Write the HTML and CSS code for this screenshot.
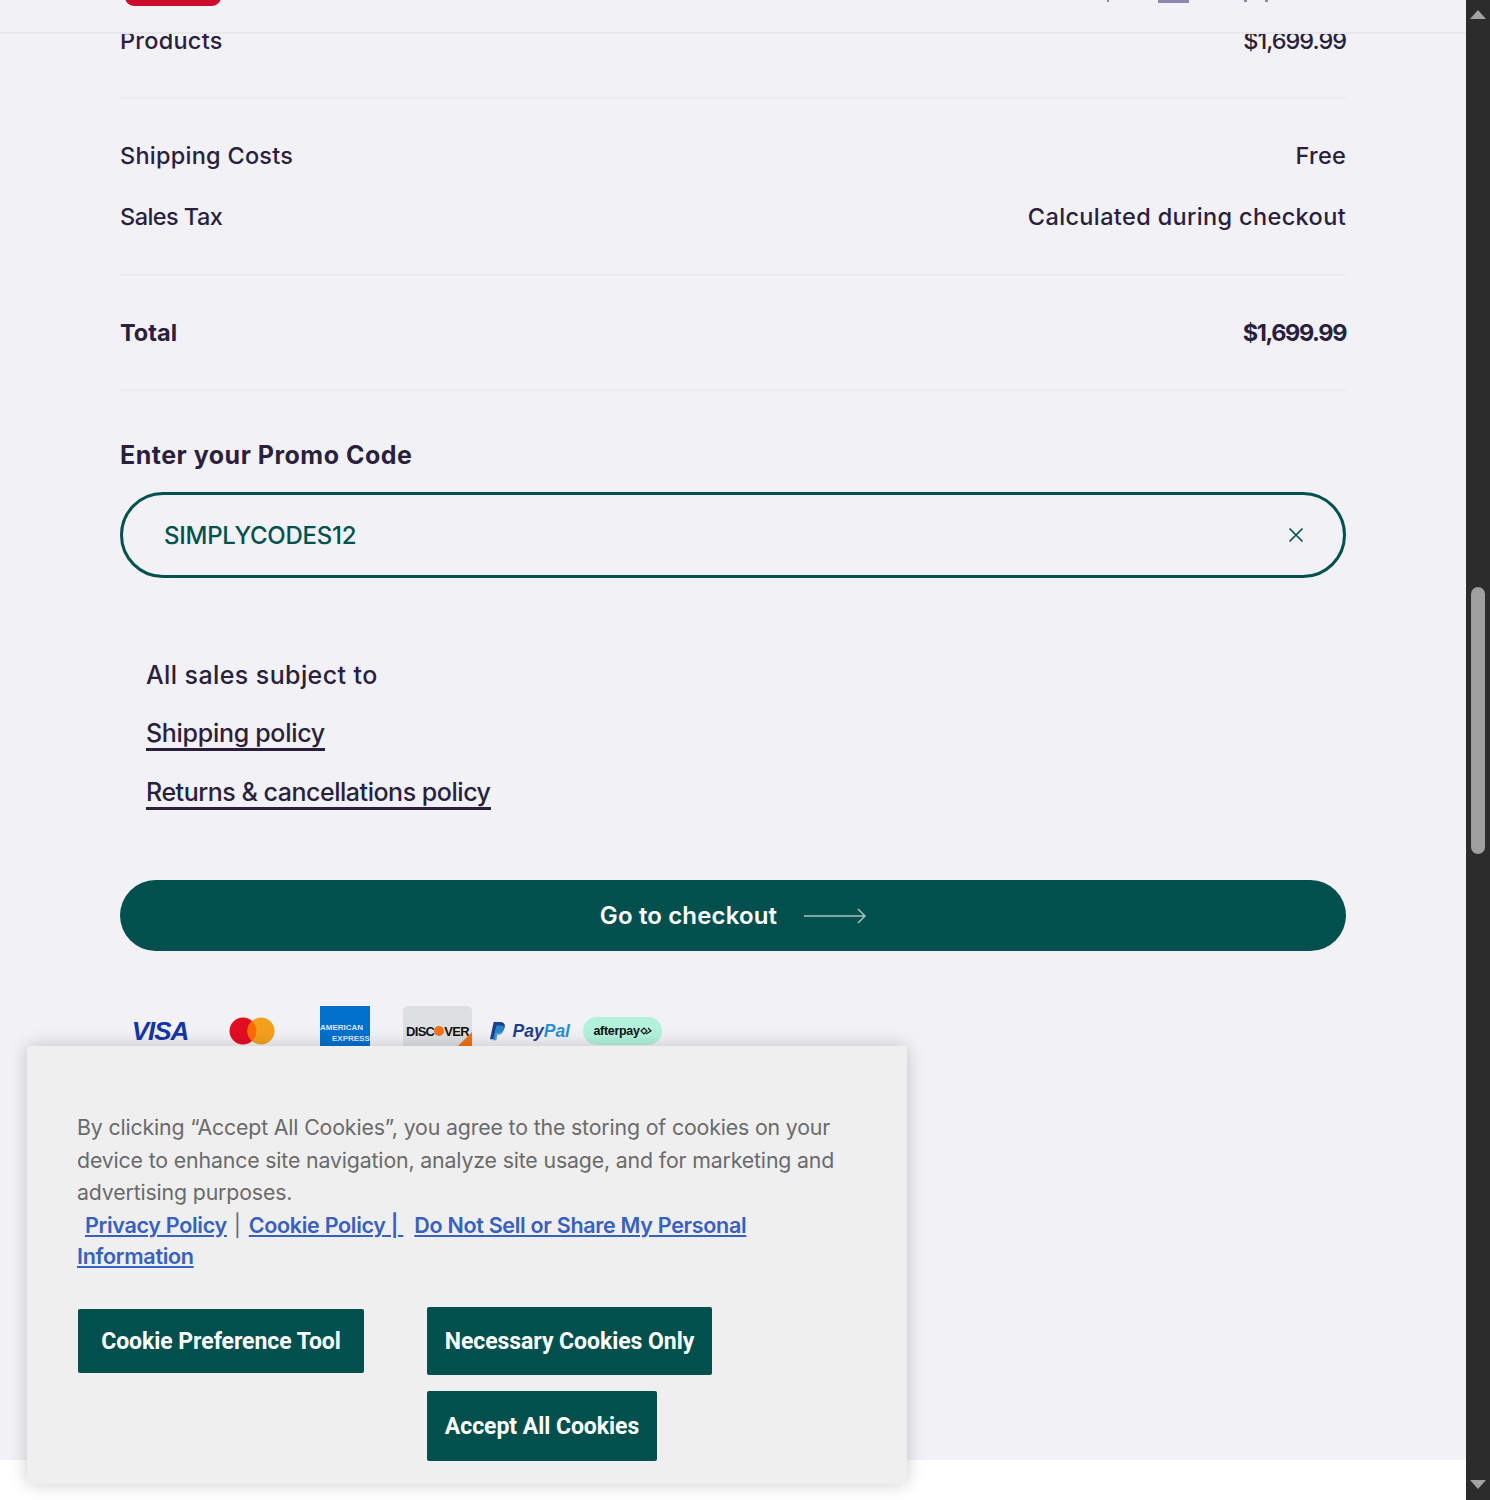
FILE: index.html
```html
<!DOCTYPE html>
<html lang="en">
<head>
<meta charset="utf-8">
<title>Cart summary</title>
<link rel="stylesheet" href="styles.css">
</head>
<body>
<div class="app">
  <div class="page">
    <header class="topbar">
      <span class="logo-stub"></span>
      <span class="nav-stubs"><i class="stub-a"></i><i class="stub-b"></i><i class="stub-c"></i><i class="stub-d"></i></span>
    </header>
    <main class="summary">
      <div class="row row-products"><span>Products</span><span class="price">$1,699.99</span></div>
      <div class="costs">
        <div class="row"><span>Shipping Costs</span><span>Free</span></div>
        <div class="row"><span class="tax">Sales Tax</span><span class="calc">Calculated during checkout</span></div>
      </div>
      <div class="row row-total"><span>Total</span><span class="price">$1,699.99</span></div>
      <h2 class="promo-title">Enter your Promo Code</h2>
      <div class="promo-input">
        <span>SIMPLYCODES12</span>
        <svg class="clear" width="16" height="16" viewBox="0 0 16 16"><path d="M1.500 1.500l13 13M14.500 1.500l-13 13" fill="none" stroke="#02514f" stroke-width="1.700"/></svg>
      </div>
      <div class="policies">
        <p class="policy-lead">All sales subject to</p>
        <p class="policy-ship"><a href="#">Shipping policy</a></p>
        <p class="policy-returns"><a href="#">Returns &amp; cancellations policy</a></p>
      </div>
      <button class="checkout">Go to checkout
        <svg width="62" height="16" viewBox="0 0 62 16"><path d="M0 8h61M54 1l7 7-7 7" fill="none" stroke="#a9c4c0" stroke-width="1.500"/></svg>
      </button>
      <div class="payments">
        <span class="pay pay-visa">VISA</span>
        <span class="pay pay-mc"><svg width="46" height="28" viewBox="0 0 46 28"><circle cx="14" cy="14" r="13.500" fill="#e30d22"/><circle cx="32" cy="14" r="13.500" fill="#f2a01e"/><path d="M23 4a13.500 13.500 0 0 1 0 20 13.500 13.500 0 0 1 0-20z" fill="#fb6a07"/></svg></span>
        <span class="pay pay-amex"><b>AMERICAN</b><b class="amex-2">EXPRESS</b></span>
        <span class="pay pay-disc">DISC<i></i>VER<em></em></span>
        <span class="pay pay-paypal"><svg width="17" height="21" viewBox="0 0 17 21"><path d="M4 0h6c5 0 7 2 6 6-1 4-4 6-8 6H6l-1 7H0z" fill="#1c3f8f"/><path d="M7 4h5c3 0 4 2 3 5s-3 5-6 5H8l-1 6H3z" fill="#2790d8" opacity=".85"/></svg><b>Pay</b><b class="pal">Pal</b></span>
        <span class="pay pay-after">afterpay<svg width="12" height="10" viewBox="0 0 12 10"><path d="M1 5l3-3 3 3-3 3zM6 8l5-3-3-3" fill="none" stroke="#111" stroke-width="1.100"/></svg></span>
      </div>
    </main>
    <footer class="page-foot"></footer>
    <aside class="cookie">
      <p class="cookie-text">By clicking “Accept All Cookies”, you agree to the storing of cookies on your device to enhance site navigation, analyze site usage, and for marketing and advertising purposes.</p>
      <div class="cookie-links">
        <div class="link-line"><a class="first" href="#">Privacy Policy</a><span class="sep">|</span><a href="#">Cookie Policy |&nbsp;</a><a class="third" href="#">Do Not Sell or Share My Personal</a></div>
        <div class="link-line"><a href="#">Information</a></div>
      </div>
      <div class="cookie-actions">
        <button class="cbtn cbtn-pref">Cookie Preference Tool</button>
        <div class="cookie-stack">
          <button class="cbtn cbtn-nec">Necessary Cookies Only</button>
          <button class="cbtn cbtn-all">Accept All Cookies</button>
        </div>
      </div>
    </aside>
  </div>
  <div class="scrollbar">
    <span class="arrow-up"></span>
    <span class="thumb"></span>
    <span class="arrow-down"></span>
  </div>
</div>
</body>
</html>
```
FILE: styles.css
```css
* { box-sizing: border-box; }
html, body { margin: 0; padding: 0; height: 1500px; overflow: hidden; }
body { font-family: "Inter", "Noto Sans", sans-serif; color: #2a1f3d; background: #fff; }
.app { display: flex; height: 1500px; }
.page { position: relative; flex: 1; height: 1500px; overflow: hidden; display: flex; flex-direction: column; }

.topbar { position: absolute; top: 0; left: 0; right: 0; height: 34px; background: #f2f1f6; border-bottom: 2px solid #e8e7ec; z-index: 2; overflow: hidden; }
.logo-stub { position: absolute; left: 125px; top: -14px; width: 96px; height: 20px; background: #cc0a2b; border-radius: 9px; }
.nav-stubs i { position: absolute; top: 0; background: #8e86b3; }
.stub-a { left: 1107px; width: 2px; height: 2px; }
.stub-b { left: 1158px; width: 31px; height: 3px; }
.stub-c { left: 1244px; width: 3px; height: 2px; }
.stub-d { left: 1265px; width: 3px; height: 2px; }

.summary { flex: 1; background: #f2f1f6; padding: 0 120px; }
.row { display: flex; justify-content: space-between; font-size: 23.500px; line-height: 32px; font-weight: 500; letter-spacing: .25px; }
.price { letter-spacing: -1px; }
.tax { letter-spacing: -.55px; }
.calc { letter-spacing: .36px; }
.row-products { padding: 25px 0 40px; border-bottom: 2px solid #ebeaef; height: 99px; }
.costs { padding: 41px 0 41px; border-bottom: 2px solid #ebeaef; display: flex; flex-direction: column; gap: 29px; height: 177px; }
.row-total { font-weight: 700; padding: 41px 0; border-bottom: 2px solid #ebeaef; height: 115px; letter-spacing: 0; }
.row-total .price { letter-spacing: -1.400px; }

.promo-title { margin: 48px 0 21px; font-size: 25px; line-height: 32px; font-weight: 700; letter-spacing: .5px; }
.promo-input { height: 86px; border: 3px solid #02514f; border-radius: 43px; padding: 0 39px 0 41px; display: flex; align-items: center; justify-content: space-between; color: #02514f; font-size: 24px; font-weight: 500; letter-spacing: -.25px; }

.policies { margin-top: 81px; padding-left: 26px; font-size: 25px; letter-spacing: -.3px; font-weight: 500; }
.policies p { margin: 0 0 26px; line-height: 32px; }
.policies .policy-lead { letter-spacing: .4px; }
.policies .policy-ship { margin-bottom: 25px; }
.policies .policy-returns { letter-spacing: -.47px; }
.policies a { color: #2a1f3d; text-decoration: none; border-bottom: 3px solid #2a1f3d; display: inline-block; line-height: 29px; }

.checkout { display: flex; align-items: center; justify-content: center; gap: 27px; width: 100%; height: 71px; margin-top: 70px; border: 0; border-radius: 36px; background: #01504e; color: #fff; font: 600 24px "Inter", sans-serif; letter-spacing: .15px; }
.payments { display: flex; align-items: center; margin-top: 55px; height: 50px; }
.pay { display: flex; align-items: center; justify-content: center; position: relative; flex: none; }
.pay-visa { width: 80px; font: italic 900 26px "Liberation Sans", sans-serif; color: #1434a8; letter-spacing: -1px; }
.pay-mc { width: 104px; margin-right: 16px; }
.pay-amex { width: 50px; height: 50px; background: #0070cc; color: #d9e9f7; flex-direction: column; justify-content: flex-start; align-items: flex-start; font: 700 8px "Liberation Sans", sans-serif; padding-top: 17px; overflow: hidden; }
.amex-2 { margin-top: 2px; padding-left: 12px; }
.pay-disc { width: 69px; height: 50px; margin-left: 33px; background: #dde0e1; border-radius: 5px; font: 700 13px "Liberation Sans", sans-serif; letter-spacing: -.7px; color: #111; overflow: hidden; }
.pay-disc i { width: 10px; height: 10px; background: #f47216; border-radius: 50%; }
.pay-disc em { position: absolute; right: 0; bottom: 10px; border-left: 14px solid transparent; border-bottom: 14px solid #f47216; }
.pay-paypal { width: 80px; margin-left: 18px; font: italic 700 17.500px "Liberation Sans", sans-serif; color: #1c3f8f; }
.pay-paypal svg { margin-right: 7px; }
.pal { color: #2790d8; }
.pay-after { width: 79px; height: 28px; margin-left: 13px; background: #b2f2dc; border-radius: 14px; font: 700 12.500px "Liberation Sans", sans-serif; color: #111; letter-spacing: -.3px; }

.page-foot { height: 40px; background: #fff; flex: none; }

.cookie { position: absolute; left: 27px; top: 1046px; width: 880px; height: 438px; padding: 65px 50px 0; background: #f0eff0; border-radius: 4px; box-shadow: 0 0 18px rgba(0,0,0,.2); z-index: 3; }
.cookie-text { margin: 0; font-size: 21.300px; line-height: 32.500px; color: #6a6a6a; letter-spacing: -.15px; }
.cookie-links { margin-top: 1px; font-size: 21.500px; line-height: 31.500px; font-weight: 600; color: #6a6a6a; letter-spacing: -.3px; }
.cookie-links a { color: #3860be; }
.link-line { display: flex; }
.cookie-links .first { margin-left: 8px; }
.cookie-links .third { margin-left: 11px; }
.sep { font-weight: 400; margin: 0 8px 0 7px; }
.cookie-actions { display: flex; align-items: flex-start; gap: 63px; margin: 34px 0 0 1px; }
.cookie-stack { display: flex; flex-direction: column; align-items: flex-start; gap: 16px; }
.cbtn { border: 0; background: #01504e; color: #fff; font: 700 23px "Roboto", sans-serif; border-radius: 2px; padding: 2px 0 0; text-align: center; letter-spacing: -.05px; }
.cbtn-pref { width: 286px; height: 64px; margin-top: 2px; }
.cbtn-nec { width: 285px; height: 68px; }
.cbtn-all { width: 230px; height: 70px; }

.scrollbar { flex: none; width: 24px; height: 1500px; background: #2c2c2c; position: relative; }
.thumb { position: absolute; left: 5px; top: 587px; width: 14px; height: 267px; background: #9f9f9f; border-radius: 7px; }
.arrow-up, .arrow-down { position: absolute; left: 4px; width: 0; height: 0; border-left: 8px solid transparent; border-right: 8px solid transparent; }
.arrow-up { top: 10px; border-bottom: 9px solid #a3a3a3; }
.arrow-down { top: 1480px; border-top: 9px solid #a3a3a3; }
```
